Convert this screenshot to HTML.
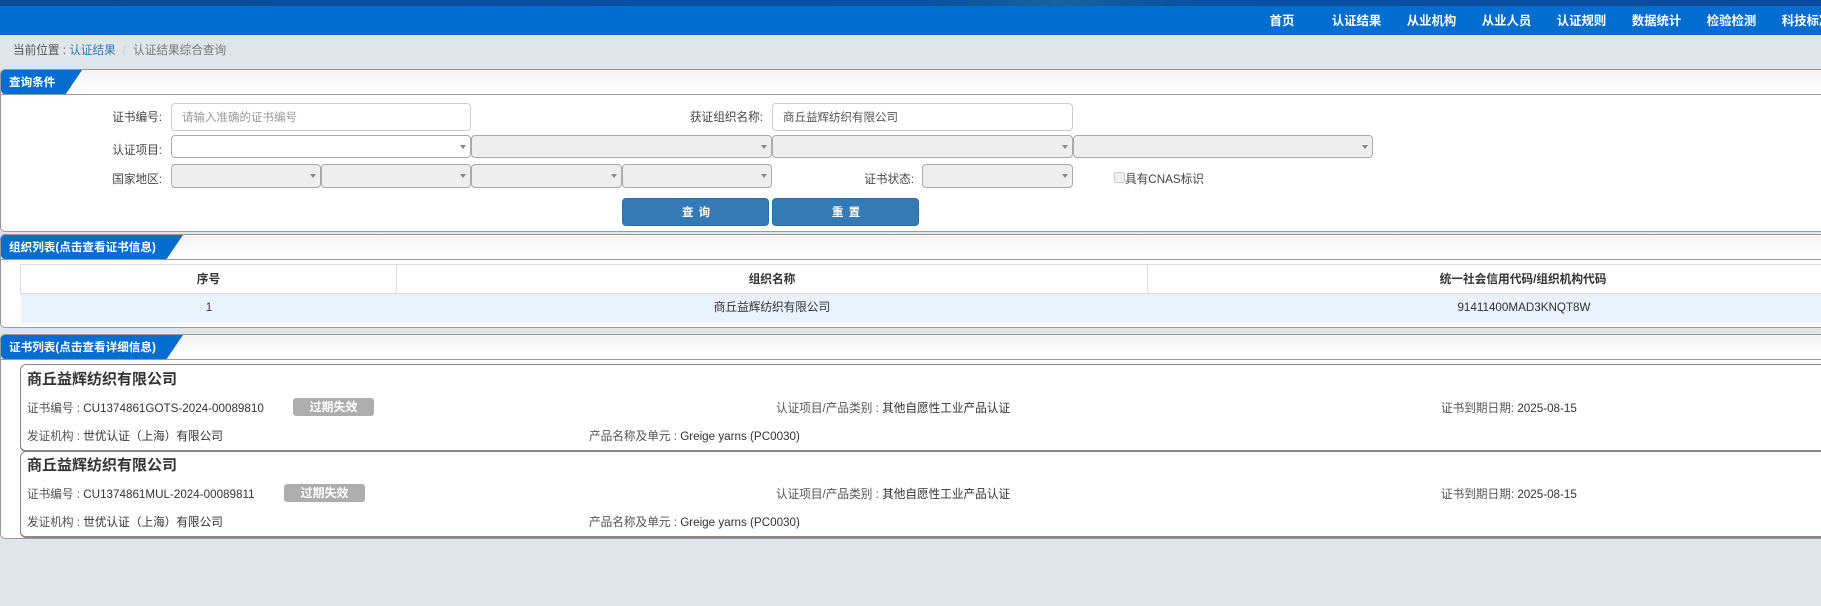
<!DOCTYPE html>
<html lang="zh-CN">
<head>
<meta charset="utf-8">
<title>认证结果综合查询</title>
<style>
*{box-sizing:border-box}
html,body{margin:0;padding:0;width:1821px;height:606px;overflow:hidden;background:#e0e5e9}
body{position:relative;font-family:"Liberation Sans","Noto Sans CJK SC",sans-serif;font-size:11.65px;color:#333}
.a{position:absolute;white-space:nowrap}
.t{position:absolute;white-space:nowrap;line-height:16px;height:16px}
.top{left:0;top:0;width:1821px;height:6px;background:linear-gradient(90deg,#0a4a9a 0,#0a4fa3 50%,#14629f 58%,#0a4fa3 66%,#0a4a9c 100%)}
.nav{left:0;top:6px;width:1821px;height:29px;background:#006dcf}
.n{position:absolute;top:13px;color:#fff;font-size:12.4px;font-weight:bold;line-height:16px;white-space:nowrap;transform:translateX(-50%)}
.panel{position:absolute;left:0;width:1840px;background:#fff;border:1px solid #999;border-radius:5px}
.hd{position:absolute;left:0;top:0;right:0;height:25px;border-bottom:1px solid #999;background:linear-gradient(#f3f3f3,#fff);border-radius:4px 4px 0 0}
.tab{position:absolute;left:0;top:0;height:24px;background:#006dcf;color:#fff;font-size:11.6px;font-weight:bold;line-height:26px;padding-left:8px;white-space:nowrap;border-radius:4px 0 0 4px}
.lb{position:absolute;text-align:right;line-height:16px;color:#444;font-size:11.65px;white-space:nowrap}
.in{position:absolute;background:#fff;border:1px solid #ccc;border-radius:4px;height:28px;line-height:28px;padding-left:10px;font-size:11.5px;color:#555;white-space:nowrap}
.s{position:absolute;height:23px;border:1px solid #aaa;border-radius:4px;background:#eee}
.s.w{background:#fff}
.s:after{content:"";position:absolute;right:4px;top:9px;border-left:3px solid transparent;border-right:3px solid transparent;border-top:4px solid #888}
.b{position:absolute;top:198px;width:147px;height:28px;background:#337ab7;border:1px solid #2e6da4;border-radius:4px;color:#fff;font-size:11.5px;font-weight:bold;text-align:center;line-height:28px;white-space:pre;letter-spacing:1px;padding-left:2px}
.th,.td{position:absolute;text-align:center;white-space:nowrap}
.th{font-weight:bold;top:264px;height:30px;line-height:29px;border:1px solid #ddd;background:#fff;color:#333;font-size:11.7px}
.td{top:294px;height:29px;line-height:28px;background:#eaf2fd;color:#333;font-size:11.65px}
.card{position:absolute;left:20px;width:1840px;background:#fff;border:1px solid #888;border-bottom:2px solid #888;border-radius:6px}
.ti{position:absolute;left:27px;font-size:15px;font-weight:bold;color:#333;line-height:20px;white-space:nowrap}
.g{color:#555}
.bd{position:absolute;width:81px;height:18px;background:#adadad;border-radius:3px;color:#fff;font-weight:bold;font-size:12px;text-align:center;line-height:18px;white-space:nowrap}
</style>
</head>
<body>
<div class="a top"></div>
<div class="a nav"></div>
<div class="n" style="left:1282px">首页</div>
<div class="n" style="left:1356.5px">认证结果</div>
<div class="n" style="left:1431.5px">从业机构</div>
<div class="n" style="left:1506.5px">从业人员</div>
<div class="n" style="left:1581.5px">认证规则</div>
<div class="n" style="left:1656.5px">数据统计</div>
<div class="n" style="left:1731.5px">检验检测</div>
<div class="n" style="left:1806.5px">科技标准</div>

<div class="t" style="left:13px;top:43px;color:#555">当前位置 : <span style="color:#337ab7">认证结果</span><span style="color:#ccc;padding:0 7px">/</span><span style="color:#777">认证结果综合查询</span></div>

<!-- 查询条件 -->
<div class="panel" style="top:69px;height:163px">
  <div class="hd"></div>
  <div class="tab" style="width:81px;clip-path:polygon(0 0,100% 0,80% 100%,0 100%)">查询条件</div>
</div>
<div class="lb" style="right:1659px;top:110px">证书编号:</div>
<div class="in" style="left:171px;top:103px;width:300px;color:#999">请输入准确的证书编号</div>
<div class="lb" style="right:1058px;top:110px">获证组织名称:</div>
<div class="in" style="left:772px;top:103px;width:301px">商丘益辉纺织有限公司</div>

<div class="lb" style="right:1659px;top:143px">认证项目:</div>
<div class="s w" style="left:171px;top:135px;width:300px"></div>
<div class="s" style="left:471px;top:135px;width:301px"></div>
<div class="s" style="left:772px;top:135px;width:301px"></div>
<div class="s" style="left:1073px;top:135px;width:300px"></div>

<div class="lb" style="right:1659px;top:172px">国家地区:</div>
<div class="s" style="left:171px;top:164px;width:150px;height:24px"></div>
<div class="s" style="left:321px;top:164px;width:150px;height:24px"></div>
<div class="s" style="left:471px;top:164px;width:151px;height:24px"></div>
<div class="s" style="left:622px;top:164px;width:150px;height:24px"></div>
<div class="lb" style="right:907px;top:172px">证书状态:</div>
<div class="s" style="left:922px;top:164px;width:151px;height:24px"></div>
<div class="a" style="left:1114px;top:172px;width:11px;height:11px;background:#eee;border:1px solid #ccc;border-radius:2px"></div>
<div class="lb" style="left:1125px;top:172px;text-align:left">具有CNAS标识</div>
<div class="b" style="left:622px">查 询</div>
<div class="b" style="left:772px">重 置</div>

<!-- 组织列表 -->
<div class="panel" style="top:234px;height:94px">
  <div class="hd"></div>
  <div class="tab" style="width:182px;clip-path:polygon(0 0,100% 0,91% 100%,0 100%)">组织列表(点击查看证书信息)</div>
</div>
<div class="th" style="left:20px;width:377px">序号</div>
<div class="th" style="left:396px;width:752px">组织名称</div>
<div class="th" style="left:1147px;width:752px">统一社会信用代码/组织机构代码</div>
<div class="td" style="left:21px;width:376px">1</div>
<div class="td" style="left:397px;width:750px">商丘益辉纺织有限公司</div>
<div class="td" style="left:1147px;width:754px">91411400MAD3KNQT8W</div>

<!-- 证书列表 -->
<div class="panel" style="top:334px;height:205px">
  <div class="hd"></div>
  <div class="tab" style="width:182px;clip-path:polygon(0 0,100% 0,91% 100%,0 100%)">证书列表(点击查看详细信息)</div>
</div>
<div class="card" style="top:364px;height:88px"></div>
<div class="card" style="top:451px;height:87px"></div>

<div class="ti" style="top:370px">商丘益辉纺织有限公司</div>
<div class="t" style="left:27px;top:401px"><span class="g">证书编号 : </span>CU1374861GOTS-2024-00089810</div>
<div class="bd" style="left:293px;top:398px">过期失效</div>
<div class="t" style="left:776px;top:401px"><span class="g">认证项目/产品类别 : </span>其他自愿性工业产品认证</div>
<div class="t" style="left:1441px;top:401px"><span class="g">证书到期日期: </span>2025-08-15</div>
<div class="t" style="left:27px;top:429px"><span class="g">发证机构 : </span>世优认证（上海）有限公司</div>
<div class="t" style="left:589px;top:429px"><span class="g">产品名称及单元 : </span>Greige yarns (PC0030)</div>

<div class="ti" style="top:456px">商丘益辉纺织有限公司</div>
<div class="t" style="left:27px;top:487px"><span class="g">证书编号 : </span>CU1374861MUL-2024-00089811</div>
<div class="bd" style="left:284px;top:484px">过期失效</div>
<div class="t" style="left:776px;top:487px"><span class="g">认证项目/产品类别 : </span>其他自愿性工业产品认证</div>
<div class="t" style="left:1441px;top:487px"><span class="g">证书到期日期: </span>2025-08-15</div>
<div class="t" style="left:27px;top:515px"><span class="g">发证机构 : </span>世优认证（上海）有限公司</div>
<div class="t" style="left:589px;top:515px"><span class="g">产品名称及单元 : </span>Greige yarns (PC0030)</div>
</body>
</html>
